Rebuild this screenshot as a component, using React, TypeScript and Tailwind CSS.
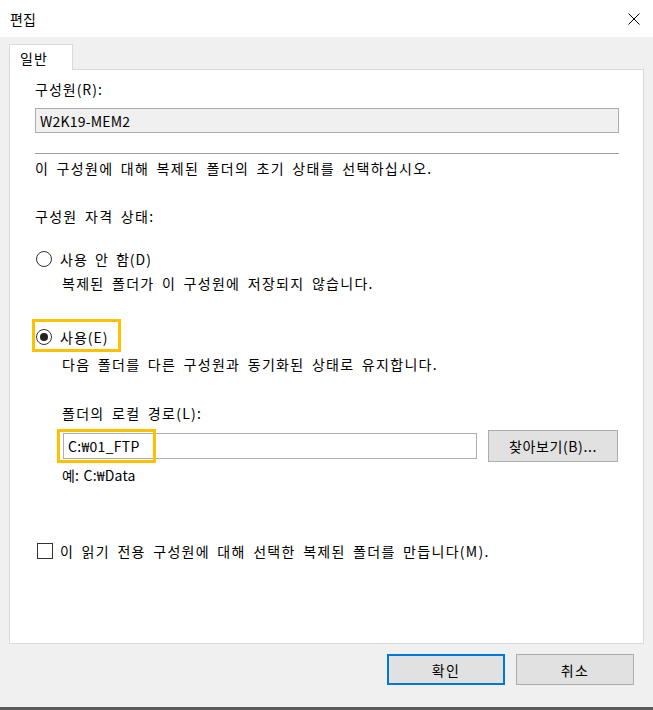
import React from "react";

// Boîte de dialogue « 편집 » (Windows, style DFS)
function Radio({ checked }: { checked?: boolean }) {
  return (
    <span className="w-[16px] h-[16px] rounded-full border border-[#333333] bg-white flex items-center justify-center shrink-0">
      {checked && <span className="w-[8px] h-[8px] rounded-full bg-[#222222]" />}
    </span>
  );
}

export default function App() {
  return (
    <div className="w-[653px] h-[710px] bg-[#f0f0f0] flex flex-col text-black text-[14px] leading-[20px] tracking-[1.3px] [word-spacing:3px] font-['Noto_Sans_CJK_KR','Noto_Sans',sans-serif] overflow-hidden">
      {/* Barre de titre */}
      <div className="h-[37px] bg-white flex items-center justify-between pl-[10px] pr-[13px] shrink-0">
        <span className="text-[14px] tracking-normal">편집</span>
        <svg width="12" height="12" viewBox="0 0 12 12" className="block">
          <path d="M0.5 0.5 L11.5 11.5 M11.5 0.5 L0.5 11.5" stroke="#000" strokeWidth="1" fill="none" />
        </svg>
      </div>

      <div className="flex-1 flex flex-col px-[9px] pt-[7px]">
        {/* Onglet */}
        <div className="flex">
          <div className="w-[64px] h-[26px] bg-white border border-[#d9d9d9] border-b-0 relative z-10 -mb-px pl-[10px] pt-[3px] tracking-[1px]">
            일반
          </div>
        </div>

        {/* Panneau */}
        <div className="h-[575px] bg-white border border-[#d9d9d9] pl-[25px] pr-[24px] pt-[9px] flex flex-col">
          <div className="tracking-[1px]">구성원(R):</div>
          <div className="mt-[9px] h-[25px] bg-[#f0f0f0] border border-[#adadad] flex items-center pl-[4px] tracking-[0.2px]">
            W2K19-MEM2
          </div>
          <div className="mt-[20px] h-px bg-[#a0a0a0]" />
          <div className="mt-[4px]">이 구성원에 대해 복제된 폴더의 초기 상태를 선택하십시오.</div>

          <div className="mt-[28px]">구성원 자격 상태:</div>

          <div className="mt-[23px] flex items-center gap-[8px] pl-[1px]">
            <Radio />
            <span className="tracking-[1px]">사용 안 함(D)</span>
          </div>
          <div className="mt-[4px] pl-[27px]">복제된 폴더가 이 구성원에 저장되지 않습니다.</div>

          <div className="mt-[34px] flex items-center gap-[8px] pl-[1px] relative">
            <Radio checked />
            <span className="tracking-[1px]">사용(E)</span>
            <div className="absolute left-[-3px] top-[-8px] w-[89px] h-[33px] border-[3px] border-[#ffc000] pointer-events-none" />
          </div>
          <div className="mt-[7px] pl-[27px]">다음 폴더를 다른 구성원과 동기화된 상태로 유지합니다.</div>

          <div className="mt-[29px] pl-[27px]">폴더의 로컬 경로(L):</div>
          <div className="mt-[6px] h-[34px] pl-[28px] flex items-center">
            <div className="relative w-[414px] h-[26px] border border-[#adadad] bg-white flex items-center pl-[4px] tracking-[0.3px]">
              C:₩01_FTP
              <div className="absolute left-[-7px] top-[-5px] w-[99px] h-[34px] border-[3px] border-[#ffc000] pointer-events-none" />
            </div>
            <button className="ml-[11px] w-[130px] h-[32px] bg-[#e1e1e1] border border-[#adadad] flex items-center justify-center tracking-[0.6px]">
              찾아보기(B)...
            </button>
          </div>
          <div className="mt-[2px] pl-[27px] tracking-[0.2px] [word-spacing:1px]">예: C:₩Data</div>

          <div className="mt-[56px] flex items-center gap-[7px] pl-[2px]">
            <span className="w-[16px] h-[16px] border border-[#333333] bg-white shrink-0" />
            <span>이 읽기 전용 구성원에 대해 선택한 복제된 폴더를 만듭니다(M).</span>
          </div>
        </div>

        {/* Boutons */}
        <div className="mt-[10px] pr-[10px] flex justify-end gap-[11px]">
          <button className="w-[118px] h-[31px] bg-[#e1e1e1] border-2 border-[#0078d7] flex items-center justify-center">
            확인
          </button>
          <button className="w-[118px] h-[31px] bg-[#e1e1e1] border border-[#adadad] flex items-center justify-center">
            취소
          </button>
        </div>
        <div className="flex-1" />
      </div>
      <div className="h-[3px] bg-[#5b5b5b] shrink-0" />
    </div>
  );
}
